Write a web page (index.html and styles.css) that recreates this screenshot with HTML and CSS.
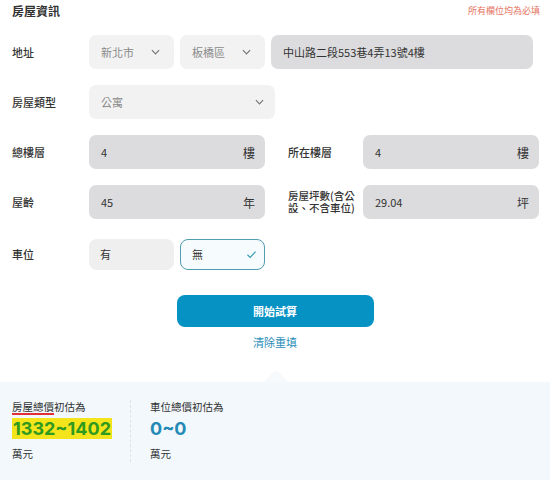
FILE: index.html
```html
<!DOCTYPE html>
<html lang="zh-Hant">
<head>
<meta charset="utf-8">
<link rel="stylesheet" href="styles.css">
</head>
<body>
<div class="form">
  <div class="head">
    <h1 class="title">房屋資訊</h1>
    <span class="req">所有欄位均為必填</span>
  </div>

  <div class="row">
    <div class="label">地址</div>
    <div class="addr">
      <div class="select w85"><span class="muted">新北市</span><svg class="chev" viewBox="0 0 10 6"><path d="M1 1l4 4 4-4"/></svg></div>
      <div class="select w85"><span class="muted">板橋區</span><svg class="chev" viewBox="0 0 10 6"><path d="M1 1l4 4 4-4"/></svg></div>
      <div class="input addr-input">中山路二段553巷4弄13號4樓</div>
    </div>
  </div>

  <div class="row">
    <div class="label">房屋類型</div>
    <div class="select w186"><span class="muted">公寓</span><svg class="chev" viewBox="0 0 10 6"><path d="M1 1l4 4 4-4"/></svg></div>
  </div>

  <div class="row two">
    <div class="label">總樓層</div>
    <div class="input unit"><span>4</span><span class="u">樓</span></div>
    <div class="label l2">所在樓層</div>
    <div class="input unit"><span>4</span><span class="u">樓</span></div>
  </div>

  <div class="row two">
    <div class="label">屋齡</div>
    <div class="input unit"><span>45</span><span class="u">年</span></div>
    <div class="label l2 small">房屋坪數(含公設、不含車位)</div>
    <div class="input unit"><span>29.04</span><span class="u">坪</span></div>
  </div>

  <div class="row park">
    <div class="label">車位</div>
    <div class="opts">
      <div class="opt">有</div>
      <div class="opt on">無<svg class="check" viewBox="0 0 12 10"><path d="M1.5 5.2l3 3 6-6.4"/></svg></div>
    </div>
  </div>

  <div class="actions">
    <button class="btn">開始試算</button>
    <a class="reset">清除重填</a>
  </div>
</div>

<div class="result">
  <div class="col">
    <div class="rlabel"><span class="squiggle">房屋總價</span>初估為</div>
    <div class="big green"><mark>1332~1402</mark></div>
    <div class="unit-t">萬元</div>
  </div>
  <div class="col col2">
    <div class="rlabel">車位總價初估為</div>
    <div class="big blue">0~0</div>
    <div class="unit-t">萬元</div>
  </div>
</div>
</body>
</html>
```

FILE: styles.css
```css
* { box-sizing: border-box; }
html, body { margin: 0; padding: 0; }
body {
  width: 550px;
  height: 480px;
  overflow: hidden;
  background: #fff;
  font-family: "Noto Sans CJK TC", "Noto Sans", sans-serif;
  color: #333;
  font-size: 11px;
}
.form { padding: 0 10px 0 12px; }
.head {
  display: flex;
  justify-content: space-between;
  align-items: center;
  height: 20px;
}
.title { margin: 0; font-size: 12px; font-weight: 700; color: #333; }
.req { color: #e5735f; font-size: 9px; }

.row {
  display: flex;
  align-items: center;
  height: 34px;
  margin-top: 15px;
}
.row + .row { margin-top: 16px; }
.label { width: 77px; flex: none; font-size: 11px; color: #333; font-weight: 500; }
.addr { display: flex; gap: 6px; }
.select {
  height: 34px;
  border-radius: 7px;
  background: #f2f2f2;
  display: flex;
  align-items: center;
  justify-content: space-between;
  padding: 0 14px 0 12px;
}
.w85 { width: 85px; }
.w186 { width: 186px; padding-right: 11px; }
.muted { color: #8a8a8a; }
.chev { width: 9px; height: 6px; fill: none; stroke: #777; stroke-width: 1.3; }
.input {
  height: 34px;
  border-radius: 7px;
  background: #dcdcde;
  display: flex;
  align-items: center;
  padding: 0 12px;
  color: #333;
}
.addr-input { width: 262px; }
.unit { width: 176px; justify-content: space-between; padding-right: 10px; }
.u { font-size: 12px; }
.l2 { width: 75px; margin-left: 23px; }
.small { font-size: 10.5px; line-height: 12px; }
.park { margin-top: 18px !important; }
.opts { display: flex; gap: 6px; }
.opt {
  width: 85px;
  height: 31px;
  border-radius: 8px;
  background: #efefef;
  display: flex;
  align-items: center;
  justify-content: space-between;
  padding: 0 11px;
}
.opt.on {
  background: #f6fcfd;
  border: 1px solid #4f9daf;
  padding-right: 7px;
}
.check { width: 11px; height: 9px; fill: none; stroke: #3d9fb3; stroke-width: 1.4; }

.actions {
  display: flex;
  flex-direction: column;
  align-items: center;
  margin-top: 24px;
  padding-right: 2px;
}
.btn {
  width: 197px;
  height: 32px;
  border: 0;
  border-radius: 8px;
  background: #0693c4;
  color: #fff;
  font-family: inherit;
  font-size: 11px;
  font-weight: 700;
}
.reset { margin-top: 7px; color: #2b8db8; font-size: 11px; }

.result {
  position: relative;
  margin-top: 32px;
  background: #f2f8fc;
  height: 100px;
  display: flex;
  padding: 18px 0 0 12px;
}
.result::before {
  content: "";
  position: absolute;
  left: 263px;
  top: -12px;
  border-left: 13px solid transparent;
  border-right: 13px solid transparent;
  border-bottom: 12px solid #f6fafd;
}
.col { width: 118px; height: 62px; }
.col2 {
  border-left: 1px dashed #dde3e8;
  padding-left: 19px;
  width: auto;
}
.rlabel { font-size: 10.5px; color: #333; line-height: 14px; }
.squiggle { text-decoration: underline solid #e0303a 1.5px; text-underline-offset: 2px; }
.big {
  font-family: "Inter", "Noto Sans", sans-serif;
  font-weight: 700;
  font-size: 18px;
  line-height: 24px;
  margin-top: 3px;
}
.green mark { background: #f3e41c; color: #2f9a1f; padding: 0 1px; }
.blue { color: #2489b5; }
.unit-t { font-size: 10.5px; margin-top: 5px; }
```
